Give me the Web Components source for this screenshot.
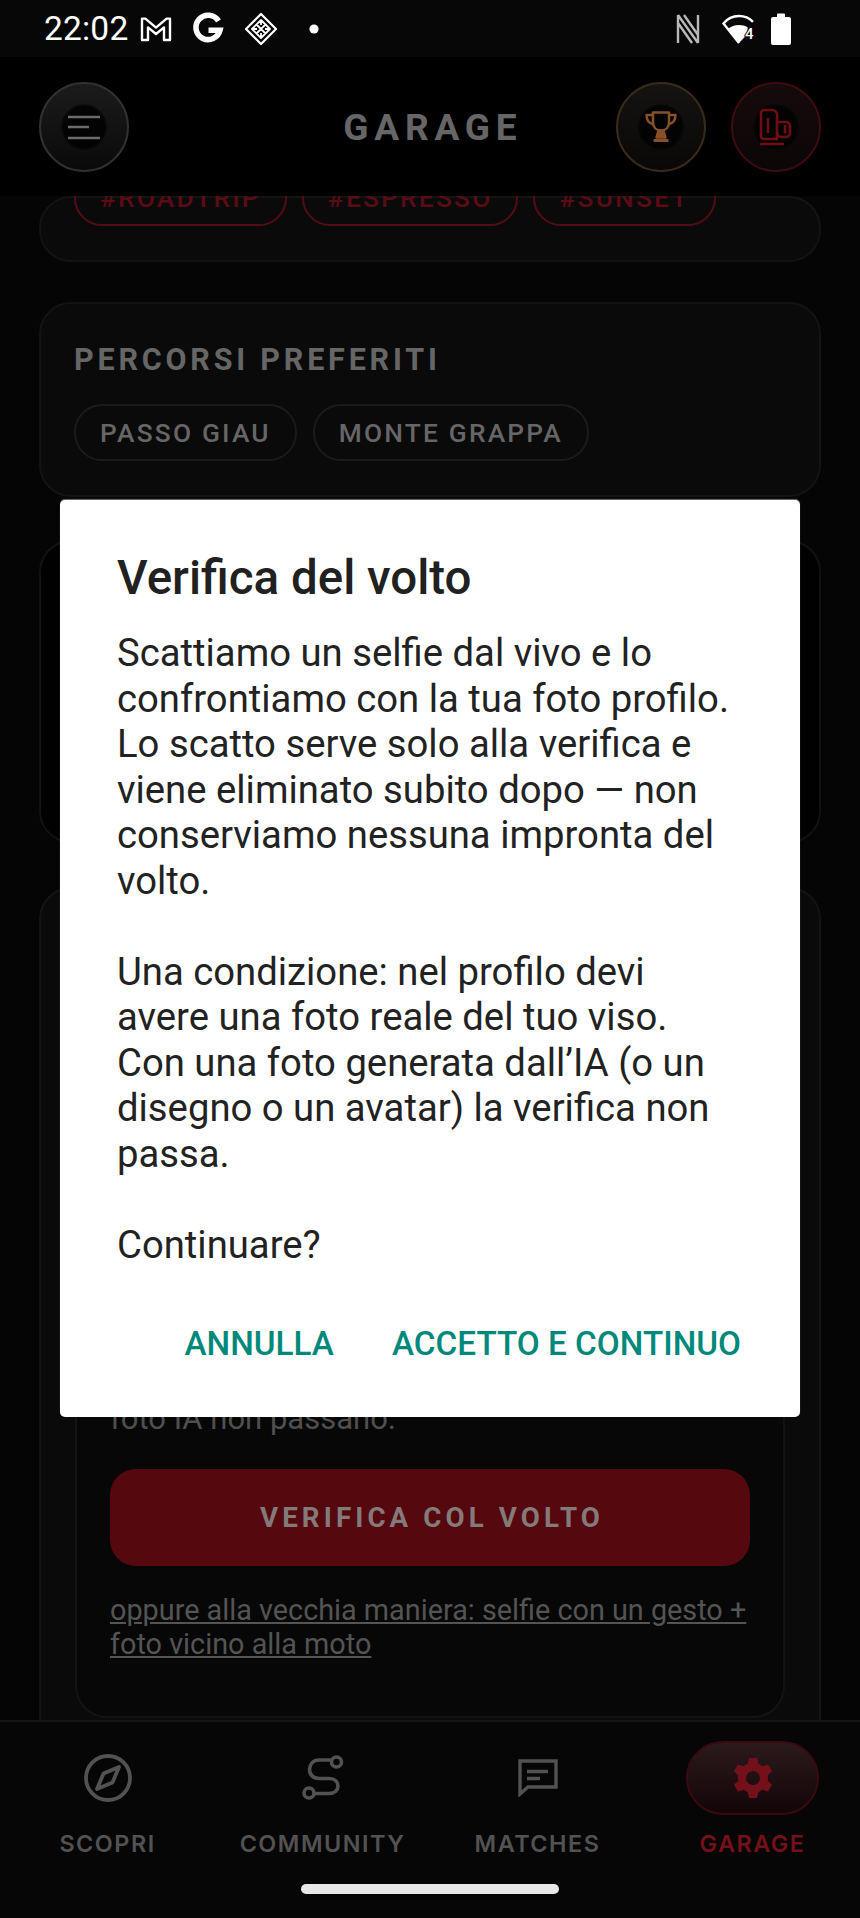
<!DOCTYPE html>
<html lang="it">
<head>
<meta charset="utf-8">
<title>Garage</title>
<style>
  html, body { margin: 0; padding: 0; background: #050505; }
  body { width: 860px; height: 1918px; overflow: hidden; font-family: Roboto, "Liberation Sans", sans-serif; }
</style>
</head>
<body>
<garage-app></garage-app>

<script>
// small helper, every element just sets its template in the constructor
// colours below are the dimmed ones, the whole app sits behind the dialog
function define(name, css, html) {
  customElements.define(name, class extends HTMLElement {
    constructor() {
      super();
      this.attachShadow({ mode: 'open' }).innerHTML = `<style>${css}</style>${html}`;
    }
  });
}

define('status-bar', `
  :host { display: flex; align-items: center; height: 57px; padding: 0 69px 0 44px; background: #070707; color: #fff; flex: none; }
  .time { font: 400 33.5px/1 Roboto, sans-serif; margin-right: 12px; letter-spacing: .2px; }
  svg { display: block; flex: none; overflow: visible; }
  .spacer { flex: 1; }
`, `
  <span class="time">22:02</span>
  <svg width="32" height="26" viewBox="0 0 32 26" fill="none" stroke="#fff" stroke-width="2.4" stroke-linejoin="round">
    <path d="M2 24V2.600h3.400L16 11.600 26.600 2.600H30V24h-6V11.400l-8 6.600-8-6.600V24z"/>
  </svg>
  <svg style="margin-left:21px" width="30" height="30" viewBox="0 0 30 30" fill="none" stroke="#fff" stroke-width="5.600">
    <path d="M25.500 7A12.200 12.200 0 1 0 27 16.200H15.500"/>
  </svg>
  <svg style="margin-left:21px" width="34" height="34" viewBox="0 0 34 34" fill="none" stroke="#fff" stroke-linejoin="round">
    <path stroke-width="2.200" d="M17 2 32 17 17 32 2 17z"/>
    <path stroke-width="1.800" d="M17 8l9 9-9 9-9-9zM12.500 12.500l9 9M21.500 12.500l-9 9M17 8v5M17 21v5M8 17h5M21 17h5"/>
  </svg>
  <svg style="margin-left:31px" width="10" height="10" viewBox="0 0 10 10"><circle cx="5" cy="5" r="4.600" fill="#fff"/></svg>
  <span class="spacer"></span>
  <svg width="26" height="30" viewBox="0 0 26 30" fill="none" stroke="#b8b8b8" stroke-width="2.400">
    <path d="M3 29V1M23 29V1M3 1l20 28M9 1l14 20M3 9l14 20"/>
  </svg>
  <svg style="margin-left:21px" width="34" height="30" viewBox="0 0 34 30">
    <path d="M17 29 1.500 9.500C5 5 10.500 2 17 2c5.500 0 10.500 2.200 14 5.800" fill="none" stroke="#fff" stroke-width="2.400"/>
    <path d="M17 29 6 15c3-2.600 6.800-4 11-4 3.200 0 6.200.800 8.600 2.300V20z" fill="#fff"/>
    <text x="23" y="24.500" font-family="Roboto, sans-serif" font-size="15" font-weight="500" fill="#fff" stroke="#070707" stroke-width="2" paint-order="stroke">4</text>
  </svg>
  <svg style="margin-left:15px" width="20" height="32" viewBox="0 0 20 32">
    <path d="M6 1.500a1 1 0 0 1 1-1h6a1 1 0 0 1 1 1V4h4a2 2 0 0 1 2 2v24a2 2 0 0 1-2 2H2a2 2 0 0 1-2-2V6a2 2 0 0 1 2-2h4z" fill="#fff"/>
  </svg>
`);

define('round-button', `
  :host { display: flex; align-items: center; justify-content: center; width: 90px; height: 90px; box-sizing: border-box; border-radius: 50%; border: 2px solid var(--ring, #313131); background: linear-gradient(180deg, var(--top, #1b1b1b), var(--bottom, #0a0a0a)); flex: none; }
  .well { display: flex; align-items: center; justify-content: center; width: 46px; height: 46px; border-radius: 50%; background: radial-gradient(circle, #030303 62%, rgba(3,3,3,0) 78%); }
`, `<div class="well"><slot></slot></div>`);

define('app-header', `
  :host { display: grid; grid-template-columns: 1fr auto 1fr; align-items: center; height: 139px; box-sizing: border-box; padding: 0 39px; background: #000; position: relative; z-index: 2; flex: none; }
  h1 { margin: 2px -5.800px 0 0; font: 700 37px/1 Roboto, sans-serif; letter-spacing: 5.800px; color: #666; }
  .left { display: flex; }
  .right { display: flex; gap: 25px; justify-content: flex-end; }
  svg { display: block; }
`, `
  <div class="left">
    <round-button>
      <svg width="32" height="26" viewBox="0 0 32 26" fill="none" stroke="#6a6a6a" stroke-width="2.600"><path d="M0 3h32M0 13h21M0 24h32"/></svg>
    </round-button>
  </div>
  <h1>GARAGE</h1>
  <div class="right">
    <round-button style="--ring:#3a2a1b;--top:#151311;--bottom:#090807">
      <svg width="34" height="34" viewBox="0 0 34 34" fill="none" stroke="#85502a" stroke-width="2.500" stroke-linejoin="round">
        <path d="M9 2.500h16v10c0 5-3.500 8-8 8s-8-3-8-8z"/>
        <path d="M9 5H2.500c0 5 2 8.500 7.500 9.500M25 5h6.500c0 5-2 8.500-7.500 9.500"/>
        <path d="M14.500 20.500h5l2 7h-9z" fill="#85502a"/>
        <path d="M9.500 30.500h15" stroke-width="3"/>
      </svg>
    </round-button>
    <round-button style="--ring:#3f0a12;--top:#150a0c;--bottom:#0b0607">
      <svg width="34" height="38" viewBox="0 0 34 38" fill="none" stroke="#700c16" stroke-width="2.600" stroke-linejoin="round">
        <path d="M2 5a3 3 0 0 1 3-3h8a5 5 0 0 1 5 5v24H5a3 3 0 0 1-3-3z"/>
        <path d="M9 10v15"/>
        <path d="M18 14h9a4 4 0 0 1 4 4v7a4 4 0 0 1-4 4h-4a5 5 0 0 1-5-5"/>
        <path d="M26 17v8"/>
        <path d="M1 36h24" stroke-width="2.600"/>
      </svg>
    </round-button>
  </div>
`);

define('section-card', `
  :host { display: block; box-sizing: border-box; margin: 0 39px; padding: 0 33px; border: 2px solid #131313; border-radius: 32px; background: #0a0a0a; }
`, `<slot></slot>`);

define('tag-chip', `
  :host { display: inline-flex; align-items: center; height: 57px; box-sizing: border-box; padding: 2px 24px 0; border: 2px solid var(--chip-line, #1b1b1b); border-radius: 28px; font: 500 26.300px/1 Roboto, sans-serif; letter-spacing: 2.200px; color: var(--chip-text, #666); white-space: nowrap; flex: none; }
`, `<slot></slot>`);

define('primary-button', `
  :host { display: flex; align-items: center; justify-content: center; height: 97px; box-sizing: border-box; padding: 1px 0 0 4px; border-radius: 26px; background: #55080e; color: #857a7a; font: 700 27.700px/1 Roboto, sans-serif; letter-spacing: 4.100px; }
`, `<slot></slot>`);

define('verify-panel', `
  :host { display: block; box-sizing: border-box; height: 719px; padding: 0 33px; margin-top: 110px; border: 2px solid #131313; border-radius: 32px; background: #070707; }
  .note { margin: 398px 0 0; font: 400 31px/40px Roboto, sans-serif; color: #4f4f4f; }
  .foot { margin: 27px 0 0; font: 400 28.800px/34px Roboto, sans-serif; color: #545454; text-decoration: underline; }
  primary-button { margin-top: 30px; }
`, `
  <p class="note">foto IA non passano.</p>
  <primary-button>VERIFICA COL VOLTO</primary-button>
  <p class="foot">oppure alla vecchia maniera: selfie con un gesto + foto vicino alla moto</p>
`);

define('nav-item', `
  :host { display: flex; flex-direction: column; align-items: center; color: #525252; }
  .icon { display: flex; align-items: center; justify-content: center; width: 133px; height: 74px; box-sizing: border-box; border-radius: 37px; }
  :host([active]) { color: #741019; }
  :host([active]) .icon { border: 2px solid #3a0a11; background: linear-gradient(180deg, #2c1a1c, #130508); }
  .label { margin-top: 16px; font: 600 23.400px/26px Inter, Roboto, sans-serif; letter-spacing: 1.500px; white-space: nowrap; }
`, `<div class="icon"><slot name="icon"></slot></div><span class="label"><slot></slot></span>`);

define('bottom-nav', `
  :host { display: block; height: 198px; box-sizing: border-box; padding-top: 19px; border-top: 2px solid #141414; background: #060606; flex: none; position: relative; z-index: 2; }
  .row { display: grid; grid-template-columns: repeat(4, 215px); }
`, `<div class="row"><slot></slot></div>`);

define('alert-dialog', `
  :host { display: block; box-sizing: border-box; width: 740px; height: 917px; padding: 50px 57px 0; background: #fff; border-radius: 5px; color: #212121; }
  h2 { margin: 0; font: 500 47.500px/56px Roboto, sans-serif; color: #212121; }
  p { margin: 25px 0 0; font: 400 38.250px/45.500px Roboto, sans-serif; color: #222; white-space: pre-line; }
  .actions { display: flex; justify-content: flex-end; gap: 58px; margin: 56px 2px 0 0; font: 500 33.300px/40px Roboto, sans-serif; color: #00897b; }
`, `
  <h2>Verifica del volto</h2>
  <p>Scattiamo un selfie dal vivo e lo confrontiamo con la tua foto profilo. Lo scatto serve solo alla verifica e viene eliminato subito dopo — non conserviamo nessuna impronta del volto.

Una condizione: nel profilo devi avere una foto reale del tuo viso. Con una foto generata dall’IA (o un disegno o un avatar) la verifica non passa.

Continuare?</p>
  <div class="actions"><span>ANNULLA</span><span>ACCETTO E CONTINUO</span></div>
`);

define('garage-app', `
  :host { display: flex; flex-direction: column; width: 860px; height: 1918px; position: relative; overflow: hidden; background: #050505; }
  .scroll { flex: 1; min-height: 0; overflow: hidden; display: flex; flex-direction: column; }
  .stack { display: flex; flex-direction: column; flex: none; }
  .tags { display: flex; gap: 15px; padding: 0 0 34px; margin-top: -29px; --chip-line: #550c16; --chip-text: #5a0c16; }
  .routes { display: flex; gap: 16px; padding-bottom: 34px; }
  h3 { margin: 0; padding: 38px 0 26px; font: 700 30.500px/36px Roboto, sans-serif; letter-spacing: 3.800px; color: #666; }
  .route-card { margin-top: 40px; }
  .blank { height: 303px; margin-top: 43px; background: #010101; border-color: #121212; }
  .verify-card { margin-top: 44px; height: 900px; padding: 0 34px; }
  .dialog { position: absolute; left: 60px; top: 500px; z-index: 5; box-shadow: 0 -1px 1px rgba(160,160,160,.7); }
  .pill { position: absolute; left: 301px; top: 1884px; width: 258px; height: 10px; border-radius: 5px; background: #e8e8e8; z-index: 6; }
  svg { display: block; }
`, `
  <status-bar></status-bar>
  <app-header></app-header>
  <div class="scroll">
    <div class="stack">
      <section-card>
        <div class="tags">
          <tag-chip>#ROADTRIP</tag-chip>
          <tag-chip>#ESPRESSO</tag-chip>
          <tag-chip>#SUNSET</tag-chip>
        </div>
      </section-card>
      <section-card class="route-card">
        <h3>PERCORSI PREFERITI</h3>
        <div class="routes">
          <tag-chip>PASSO GIAU</tag-chip>
          <tag-chip>MONTE GRAPPA</tag-chip>
        </div>
      </section-card>
      <section-card class="blank"></section-card>
      <section-card class="verify-card">
        <verify-panel></verify-panel>
      </section-card>
    </div>
  </div>
  <bottom-nav>
    <nav-item>
      <svg slot="icon" width="48" height="48" viewBox="0 0 48 48" fill="none" stroke="currentColor" stroke-width="3.800" stroke-linejoin="round">
        <circle cx="24" cy="24" r="22"/>
        <path d="M35 13 28.500 28.500 13 35 19.500 19.500z"/>
      </svg>
      SCOPRI
    </nav-item>
    <nav-item>
      <svg slot="icon" width="42" height="46" viewBox="0 0 42 46" fill="none" stroke="currentColor" stroke-width="3.600">
        <circle cx="34.500" cy="7" r="5"/>
        <circle cx="7" cy="38" r="5"/>
        <path d="M29.500 5H17C11 5 7.500 9.500 7.500 14.500S11 23.500 17 23.500h10c6 0 9 3.500 9 7.500s-3 7.500-9 7.500H12"/>
      </svg>
      COMMUNITY
    </nav-item>
    <nav-item>
      <svg slot="icon" width="40" height="38" viewBox="0 0 40 38" fill="none" stroke="currentColor" stroke-width="3.400">
        <path d="M2 2h36v26H10l-8 7z"/>
        <path d="M9 12.500h21M9 19.500h13"/>
      </svg>
      MATCHES
    </nav-item>
    <nav-item active>
      <svg slot="icon" width="42" height="44" viewBox="0 0 42 44">
        <path fill="currentColor" fill-rule="evenodd" d="M17 0h8l1.300 5.800c1.500.600 2.900 1.400 4.100 2.400l5.700-1.800 4 6.900-4.400 4c.2.800.3 1.700.3 2.700s-.1 1.900-.3 2.700l4.400 4-4 6.900-5.700-1.800c-1.200 1-2.600 1.800-4.100 2.400L25 40h-8l-1.300-5.800c-1.500-.6-2.900-1.400-4.100-2.400l-5.700 1.800-4-6.900 4.400-4c-.2-.8-.3-1.700-.3-2.700s.1-1.900.3-2.700l-4.400-4 4-6.900 5.700 1.800c1.200-1 2.600-1.800 4.100-2.400zM21 13a7 7 0 1 0 0 14 7 7 0 0 0 0-14z" transform="translate(0 2)"/>
      </svg>
      GARAGE
    </nav-item>
  </bottom-nav>
  <alert-dialog class="dialog"></alert-dialog>
  <div class="pill"></div>
`);
</script>
</body>
</html>
